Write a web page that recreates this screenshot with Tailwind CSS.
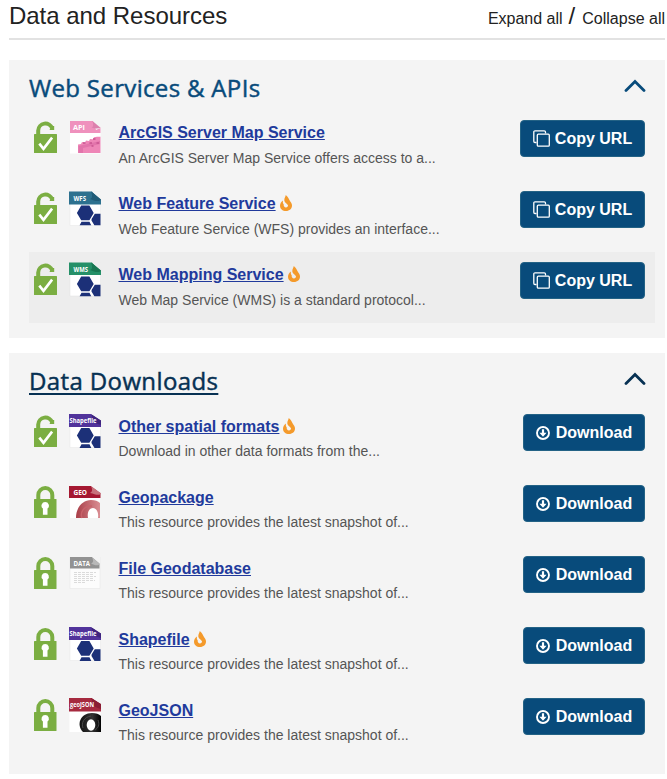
<!DOCTYPE html>
<html lang="en">
<head>
<meta charset="utf-8">
<title>Data and Resources</title>
<script src="https://cdn.jsdelivr.net/npm/@tailwindcss/browser@4"></script>
</head>
<body class="bg-white font-['Liberation_Sans',Arial,sans-serif] text-[#222]">
<svg class="hidden">
  <symbol id="open" viewBox="0 0 23 32"><path d="M4.200 15V9.500a7.200 7.200 0 0 1 14-2.100" fill="none" stroke="#7bae42" stroke-width="4"/><path d="M17.500 5h2.700v4h-4.700z" fill="#7bae42"/><rect y="13" width="23" height="19" rx=".5" fill="#7bae42"/><path d="M5.300 22.600l4.200 5.300 8.600-11.300" fill="none" stroke="#fff" stroke-width="2.600"/></symbol>
  <symbol id="closed" viewBox="0 0 23 32"><path d="M4.300 15V9a7 7 0 0 1 14 0v6" fill="none" stroke="#7bae42" stroke-width="4"/><rect y="13" width="22.500" height="19" rx=".5" fill="#7bae42"/><path d="M11.200 16a3.700 3.700 0 0 1 2.300 6.600V28.800h-4.600V22.600a3.700 3.700 0 0 1 2.300-6.600z" fill="#fff"/></symbol>
  <symbol id="hex" viewBox="0 0 32 34"><path d="M12.200 14h8.200l4.300 7.400-4.300 7.400h-8.200L7.900 21.400zM22.600 27.500l3.200-5.300h5.700V34h-6l-3-5zM10.500 34l2-3.700h8L22.300 34z" fill="#1c3078"/></symbol>
  <symbol id="flame" viewBox="0 0 12 16"><path d="M5.800 0C8.800 2.200 8.600 4.400 10.300 6.400 11.400 7.700 12 9 12 10.500 12 13.700 9.500 16 6 16S0 13.800 0 10.700C0 8.500 1.200 6.800 3 5.500 2.700 7.200 2.800 8.500 3.700 9.300 3.400 11.300 4.500 12.500 6 12.500 7.200 12.500 8 11.700 8 10.600 8 8.800 4.500 8 4.300 5.200 4.200 3 5.500 2 5.800 0z" fill="#f49a2b"/></symbol>
  <symbol id="chev" viewBox="0 0 22 13"><path d="M2 11.500L11 2.500l9 9" fill="none" stroke="currentColor" stroke-width="2.800" stroke-linecap="round"/></symbol>
  <symbol id="copy" viewBox="0 0 17 17"><path d="M3.500 12.500H2A1.200 1.200 0 0 1 .8 11.300V2A1.200 1.200 0 0 1 2 .8h9.300A1.200 1.200 0 0 1 12.500 2v1.500" fill="none" stroke="#fff" stroke-width="1.300"/><rect x="4.300" y="4.200" width="12" height="12" rx="1" fill="none" stroke="#fff" stroke-width="1.300"/></symbol>
  <symbol id="down" viewBox="0 0 14 14"><circle cx="7" cy="7" r="6" fill="none" stroke="#fff" stroke-width="1.900"/><path d="M5.900 3.300h2.200v3.500h2.500L7 10.700 3.400 6.800h2.500z" fill="#fff"/></symbol>
</svg>
<main class="w-[656px] ml-[9px]">
  <header class="h-10 border-b-2 border-[#e2e2e2] flex justify-between">
    <h1 class="text-[24px] leading-8 tracking-[-0.03px]">Data and Resources</h1>
    <div class="text-[24px] leading-8 whitespace-nowrap flex"><span class="text-[16px] leading-[38px]">Expand all</span><span class="pl-[6px] pr-[7px]">/</span><span class="text-[16px] leading-[38px]">Collapse all</span></div>
  </header>

  <section class="mt-5 h-[278px] bg-[#f4f4f4] pl-5 pr-[10px]">
    <div class="h-[50px] pt-[11px] pr-[9px] flex justify-between text-[#084b7b]"><h2 class="font-['Open_Sans','Noto_Sans',sans-serif] font-medium text-[24px] leading-[34px] tracking-[0.33px] [-webkit-text-stroke:0.45px_currentColor]">Web Services &amp; APIs</h2><svg class="w-[22px] h-[13px] mt-2"><use href="#chev"/></svg></div>
    <article class="h-[71px] flex pl-[5px] pr-[10px]">
      <svg class="w-[23px] h-8 mt-[11px]"><use href="#open"/></svg>
      <svg class="w-8 h-[34px] mt-[11px] ml-3" viewBox="0 0 32 34"><path d="M1 0h24l6.500 7v25.500H1z" fill="#fff"/><path d="M1 0h23l7.500 6.500V12H1z" fill="#ef91bd"/><path d="M24 0h7.500v7L27 9z" fill="#f4f4f4"/><path d="M23.500 0c1 4 1 6-1 6.500 4 1.500 7 1 9 .2z" fill="#dc80ad"/><path d="M9 23.500l3-.5 1-2 3 .5 1-2 3 .5 1-2 3 .3 1-2 3-.5h3.500V32H9z" fill="#ee86b7"/><path d="M9.500 25L31 20v3l-17 4v5H9.500z" fill="#e274ab"/><path d="M14 22h2.500m4 0h2.500m1-4h2.500m-4 7h2m3-3h2.500" stroke="#c85390" stroke-width="1.500"/><text x="4" y="9" fill="#fff" font-family="Open Sans" font-size="7" font-weight="700" textLength="12" lengthAdjust="spacingAndGlyphs">API</text></svg>
      <div class="ml-[17.500px] pt-[11px] whitespace-nowrap"><h3 class="h-[25px] flex gap-1"><a href="#" class="text-[16px] leading-6 font-bold underline text-[#213a9c]">ArcGIS Server Map Service</a></h3><p class="text-[14px] leading-6 text-[#555]">An ArcGIS Server Map Service offers access to a...</p></div>
      <button class="ml-auto mt-[10px] w-[125px] h-[37px] rounded-[4px] border border-[#236285] bg-[#084b7b] text-white text-[16px] font-bold flex items-center justify-center gap-[5px]"><svg class="w-[17px] h-[17px]"><use href="#copy"/></svg>Copy URL</button>
    </article>
    <article class="h-[71px] flex pl-[5px] pr-[10px]">
      <svg class="w-[23px] h-8 mt-[11px]"><use href="#open"/></svg>
      <svg class="w-8 h-[35px] mt-[10px] ml-3" viewBox="0 0 32 35"><path d="M1 1h30.500v33.500H1z" fill="#fff" stroke="#e7e7e7" stroke-width=".5"/><path d="M0 .5h23l9 8V13.500H0z" fill="#2d718f"/><path d="M23 .5h9v8z" fill="#f4f4f4"/><path d="M22 .5c2 5 1 7-1 7.500 5 2.200 9 3 11 .5z" fill="#205b77"/><use href="#hex" y=".5" width="32" height="34"/><text x="4.500" y="10" fill="#fff" font-family="Open Sans" font-size="7" font-weight="700" textLength="12.500" lengthAdjust="spacingAndGlyphs">WFS</text></svg>
      <div class="ml-[17.500px] pt-[11px] whitespace-nowrap"><h3 class="h-[25px] flex gap-1"><a href="#" class="text-[16px] leading-6 font-bold underline text-[#213a9c]">Web Feature Service</a><svg class="w-3 h-4 mt-[3px]"><use href="#flame"/></svg></h3><p class="text-[14px] leading-6 text-[#555]">Web Feature Service (WFS) provides an interface...</p></div>
      <button class="ml-auto mt-[10px] w-[125px] h-[37px] rounded-[4px] border border-[#236285] bg-[#084b7b] text-white text-[16px] font-bold flex items-center justify-center gap-[5px]"><svg class="w-[17px] h-[17px]"><use href="#copy"/></svg>Copy URL</button>
    </article>
    <article class="h-[71px] flex pl-[5px] pr-[10px] bg-[#ededed]">
      <svg class="w-[23px] h-8 mt-[11px]"><use href="#open"/></svg>
      <svg class="w-8 h-[35px] mt-[10px] ml-3" viewBox="0 0 32 35"><path d="M1 .5h30.500V34H1z" fill="#fff" stroke="#e3e3e3" stroke-width=".5"/><path d="M0 .5h23l9 8V13H0z" fill="#259068"/><path d="M23 .5h9v8z" fill="#ededed"/><path d="M22 .5c2 5 1 7-1 7.500 5 2.200 9 3 11 .5z" fill="#197652"/><use href="#hex" y=".5" width="32" height="34"/><text x="4.500" y="9.500" fill="#fff" font-family="Open Sans" font-size="7" font-weight="700" textLength="14.500" lengthAdjust="spacingAndGlyphs">WMS</text></svg>
      <div class="ml-[17.500px] pt-[11px] whitespace-nowrap"><h3 class="h-[25px] flex gap-1"><a href="#" class="text-[16px] leading-6 font-bold underline text-[#213a9c]">Web Mapping Service</a><svg class="w-3 h-4 mt-[3px]"><use href="#flame"/></svg></h3><p class="text-[14px] leading-6 text-[#555]">Web Map Service (WMS) is a standard protocol...</p></div>
      <button class="ml-auto mt-[10px] w-[125px] h-[37px] rounded-[4px] border border-[#236285] bg-[#084b7b] text-white text-[16px] font-bold flex items-center justify-center gap-[5px]"><svg class="w-[17px] h-[17px]"><use href="#copy"/></svg>Copy URL</button>
    </article>
  </section>

  <section class="mt-[15px] h-[421px] bg-[#f4f4f4] pl-5 pr-[10px]">
    <div class="h-[51px] pt-[11px] pr-[9px] flex justify-between text-[#073153]"><h2 class="font-['Open_Sans','Noto_Sans',sans-serif] font-medium text-[24px] leading-[34px] tracking-[0.38px] underline decoration-2 underline-offset-[3px] [-webkit-text-stroke:0.45px_currentColor]">Data Downloads</h2><svg class="w-[22px] h-[13px] mt-2"><use href="#chev"/></svg></div>
    <article class="h-[71px] flex pl-[5px] pr-[10px]">
      <svg class="w-[23px] h-8 mt-[11px]"><use href="#open"/></svg>
      <svg class="w-8 h-[34px] mt-[10px] ml-3" viewBox="0 0 32 34"><path d="M1 0h30.500v33.500H1z" fill="#fff" stroke="#e7e7e7" stroke-width=".5"/><path d="M0 0h22l10 6.500V13H0z" fill="#51339b"/><path d="M22 0h10v6.500z" fill="#f4f4f4"/><path d="M22 0c2 4 1 6-1 7 5 1 9 4 11 4V6.500z" fill="#3e247f"/><use href="#hex" width="32" height="34"/><text x=".5" y="9" fill="#fff" font-family="Open Sans" font-size="7" font-weight="700" textLength="27" lengthAdjust="spacingAndGlyphs">Shapefile</text></svg>
      <div class="ml-[17.500px] pt-[11px] whitespace-nowrap"><h3 class="h-6 flex gap-1"><a href="#" class="text-[16px] leading-6 font-bold underline text-[#213a9c]">Other spatial formats</a><svg class="w-3 h-4 mt-[3px]"><use href="#flame"/></svg></h3><p class="text-[14px] leading-6 text-[#555]">Download in other data formats from the...</p></div>
      <button class="ml-auto mt-[10px] w-[122px] h-[37px] rounded-[4px] border border-[#236285] bg-[#084b7b] text-white text-[16px] font-bold flex items-center justify-center gap-[6px]"><svg class="w-[14px] h-[14px]"><use href="#down"/></svg>Download</button>
    </article>
    <article class="h-[71px] flex pl-[5px] pr-[10px]">
      <svg class="w-[23px] h-8 mt-[11px]"><use href="#closed"/></svg>
      <svg class="w-8 h-[34px] mt-[11px] ml-3" viewBox="0 0 32 34"><defs><linearGradient id="red"><stop stop-color="#a93e48"/><stop offset="1" stop-color="#d98d92"/></linearGradient></defs><path d="M1 0h30v32H1z" fill="#fff"/><path d="M0 0h22l9.500 7v5H0z" fill="#a51831"/><path d="M22 0h9.500v7z" fill="#f4f4f4"/><path d="M22 0c2 4 1 6-1 7 5 1 8 3 10.500 1V7z" fill="#c7727b"/><path d="M7 32c0-11 7-18 15-18 4 0 7 1 9 3v15h-2c1-6-2-10-5-10-4 0-6 5-5 10z" fill="url(#red)"/><path d="M13 32c-2-5 1-12 10-12" fill="none" stroke="#c8626a" stroke-width="1.500"/><text x="4.500" y="8.500" fill="#fff" font-family="Open Sans" font-size="7" font-weight="700" textLength="13.500" lengthAdjust="spacingAndGlyphs">GEO</text></svg>
      <div class="ml-[17.500px] pt-[11px] whitespace-nowrap"><h3 class="h-6 flex gap-1"><a href="#" class="text-[16px] leading-6 font-bold underline text-[#213a9c]">Geopackage</a></h3><p class="text-[14px] leading-6 text-[#555]">This resource provides the latest snapshot of...</p></div>
      <button class="ml-auto mt-[10px] w-[122px] h-[37px] rounded-[4px] border border-[#236285] bg-[#084b7b] text-white text-[16px] font-bold flex items-center justify-center gap-[6px]"><svg class="w-[14px] h-[14px]"><use href="#down"/></svg>Download</button>
    </article>
    <article class="h-[71px] flex pl-[5px] pr-[10px]">
      <svg class="w-[23px] h-8 mt-[11px]"><use href="#closed"/></svg>
      <svg class="w-8 h-[34px] mt-[11px] ml-3" viewBox="0 0 32 34"><path d="M1 0h30v31.500H1z" fill="#fcfcfc" stroke="#e7e7e7" stroke-width=".6"/><path d="M1 0h22l7.500 6v5.500H1z" fill="#929292"/><path d="M23 0h8v7z" fill="#f4f4f4"/><path d="M23 0c2 4 1 6-1 6.500 4 2 7 2.500 9 .5z" fill="#b8b8b8"/><path d="M5 15.500h22M5 17.500h20M5 19.500h22M5 21.500h19M5 23.500h21M5 25.500h12" stroke="#c4c4c4" stroke-width=".6" stroke-dasharray="3 1"/><text x="4.500" y="8.500" fill="#fff" font-family="Open Sans" font-size="7" font-weight="700" textLength="16.500" lengthAdjust="spacingAndGlyphs">DATA</text></svg>
      <div class="ml-[17.500px] pt-[11px] whitespace-nowrap"><h3 class="h-6 flex gap-1"><a href="#" class="text-[16px] leading-6 font-bold underline text-[#213a9c]">File Geodatabase</a></h3><p class="text-[14px] leading-6 text-[#555]">This resource provides the latest snapshot of...</p></div>
      <button class="ml-auto mt-[10px] w-[122px] h-[37px] rounded-[4px] border border-[#236285] bg-[#084b7b] text-white text-[16px] font-bold flex items-center justify-center gap-[6px]"><svg class="w-[14px] h-[14px]"><use href="#down"/></svg>Download</button>
    </article>
    <article class="h-[71px] flex pl-[5px] pr-[10px]">
      <svg class="w-[23px] h-8 mt-[11px]"><use href="#closed"/></svg>
      <svg class="w-8 h-[34px] mt-[10px] ml-3" viewBox="0 0 32 34"><path d="M1 0h30.500v33.500H1z" fill="#fff" stroke="#e7e7e7" stroke-width=".5"/><path d="M0 0h22l10 6.500V13H0z" fill="#51339b"/><path d="M22 0h10v6.500z" fill="#f4f4f4"/><path d="M22 0c2 4 1 6-1 7 5 1 9 4 11 4V6.500z" fill="#3e247f"/><use href="#hex" width="32" height="34"/><text x=".5" y="9" fill="#fff" font-family="Open Sans" font-size="7" font-weight="700" textLength="27" lengthAdjust="spacingAndGlyphs">Shapefile</text></svg>
      <div class="ml-[17.500px] pt-[11px] whitespace-nowrap"><h3 class="h-6 flex gap-1"><a href="#" class="text-[16px] leading-6 font-bold underline text-[#213a9c]">Shapefile</a><svg class="w-3 h-4 mt-[3px]"><use href="#flame"/></svg></h3><p class="text-[14px] leading-6 text-[#555]">This resource provides the latest snapshot of...</p></div>
      <button class="ml-auto mt-[10px] w-[122px] h-[37px] rounded-[4px] border border-[#236285] bg-[#084b7b] text-white text-[16px] font-bold flex items-center justify-center gap-[6px]"><svg class="w-[14px] h-[14px]"><use href="#down"/></svg>Download</button>
    </article>
    <article class="h-[71px] flex pl-[5px] pr-[10px]">
      <svg class="w-[23px] h-8 mt-[11px]"><use href="#closed"/></svg>
      <svg class="w-8 h-[34px] mt-[10px] ml-3" viewBox="0 0 32 34"><defs><linearGradient id="blk"><stop stop-color="#111"/><stop offset=".6" stop-color="#333"/><stop offset="1" stop-color="#000"/></linearGradient></defs><path d="M.5 1h31v33H.5z" fill="#fff"/><path d="M0 0h23l9 6v7.500H0z" fill="#a62a3f"/><path d="M23 0h9v6z" fill="#f4f4f4"/><path d="M22 0c2 4 1 6-1 7 5 1 9 4 11 4V6z" fill="#8a1d33"/><path d="M14 34c-7-7-3-19 9-19 4 0 7 1 9 3v16z" fill="url(#blk)"/><path d="M14 30c-2-5 1-11 8-12M29 22c2 5 0 8-3 10" fill="none" stroke="#484848"/><ellipse cx="22" cy="27" rx="4.300" ry="5.700" fill="#fff"/><text x="1" y="9" fill="#fff" font-family="Open Sans" font-size="6.500" font-weight="700" textLength="24" lengthAdjust="spacingAndGlyphs">geoJSON</text></svg>
      <div class="ml-[17.500px] pt-[11px] whitespace-nowrap"><h3 class="h-6 flex gap-1"><a href="#" class="text-[16px] leading-6 font-bold underline text-[#213a9c]">GeoJSON</a></h3><p class="text-[14px] leading-6 text-[#555]">This resource provides the latest snapshot of...</p></div>
      <button class="ml-auto mt-[10px] w-[122px] h-[37px] rounded-[4px] border border-[#236285] bg-[#084b7b] text-white text-[16px] font-bold flex items-center justify-center gap-[6px]"><svg class="w-[14px] h-[14px]"><use href="#down"/></svg>Download</button>
    </article>
  </section>
</main>
</body>
</html>
